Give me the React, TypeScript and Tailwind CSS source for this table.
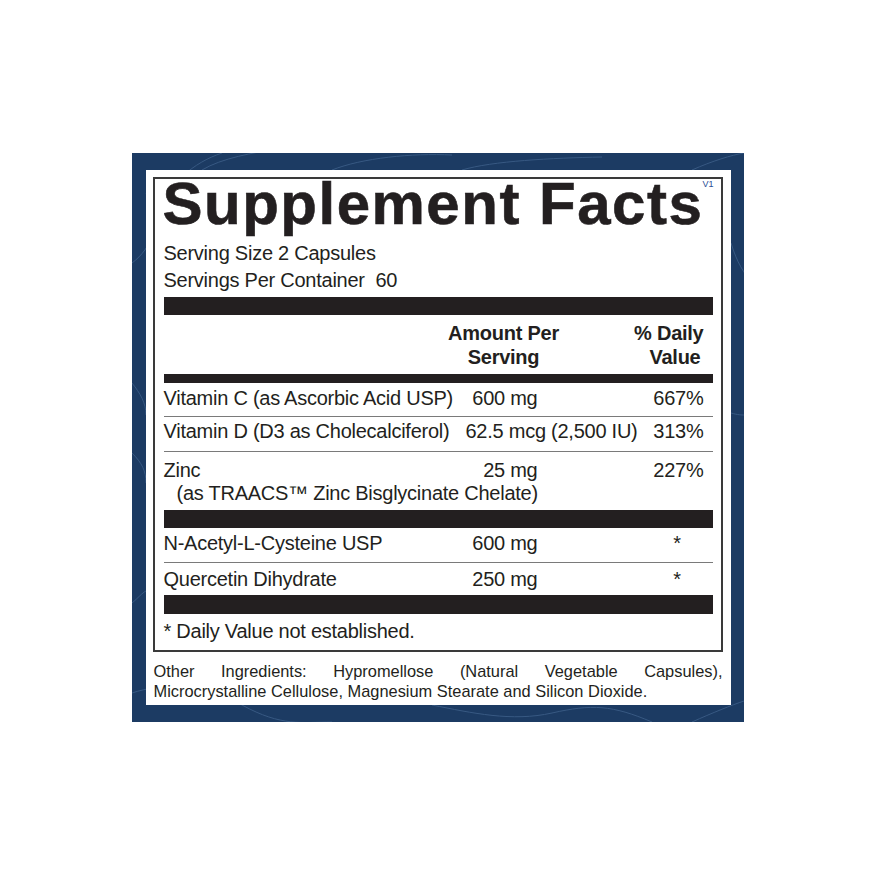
import React from 'react';

const INK = 'text-[#231f20]';

type Row = {
  name: React.ReactNode;
  amount: string;
  wide?: boolean;
  dv: string;
  pad: string;
  line?: boolean;
};

const vitamins: Row[] = [
  { name: 'Vitamin C (as Ascorbic Acid USP)', amount: '600 mg', dv: '667%', pad: 'pt-[3px] pb-[6px]', line: true },
  { name: 'Vitamin D (D3 as Cholecalciferol)', amount: '62.5 mcg (2,500 IU)', wide: true, dv: '313%', pad: 'pt-[2px] pb-[8px]', line: true },
  {
    name: (
      <>
        <div>Zinc</div>
        <div className="pl-[13px] leading-[23px]">(as TRAACS™ Zinc Bisglycinate Chelate)</div>
      </>
    ),
    amount: '25 mg',
    dv: '227%',
    pad: 'pt-[6px] pb-[5px]',
  },
];

const others: Row[] = [
  { name: 'N-Acetyl-L-Cysteine USP', amount: '600 mg', dv: '*', pad: 'pt-[3px] pb-[7px]', line: true },
  { name: 'Quercetin Dihydrate', amount: '250 mg', dv: '*', pad: 'pt-[4px] pb-[4px]' },
];

function FactRow({ row }: { row: Row }) {
  return (
    <div className={`flex items-start leading-[24px] ${row.pad} ${row.line ? 'border-b border-[#7a7a7a]' : ''}`}>
      <div className="w-[302px] whitespace-nowrap">{row.name}</div>
      <div className="w-[185px] whitespace-nowrap">
        {row.wide ? row.amount : <span className="inline-block w-[72px] text-right">{row.amount}</span>}
      </div>
      <div className={`w-[53px] ${row.dv === '*' ? 'text-center' : 'text-right'}`}>{row.dv}</div>
    </div>
  );
}

function Waves() {
  return (
    <svg className="absolute inset-0 h-full w-full" viewBox="0 0 612 569" fill="none">
      <g stroke="#4a6d98" strokeWidth="1" opacity="0.6">
        <path d="M20 60 C 40 30, 60 10, 90 0" />
        <path d="M0 110 C 20 95, 30 70, 14 40" />
        <path d="M70 17 C 90 5, 120 0, 150 -5" />
        <path d="M200 17 C 230 5, 280 0, 320 2" />
        <path d="M330 17 C 360 8, 420 5, 470 4" />
        <path d="M560 17 C 580 8, 600 2, 612 0" />
        <path d="M599 90 C 605 110, 612 120, 620 130" />
        <path d="M599 260 C 606 262, 610 262, 612 262" />
        <path d="M0 230 C 8 240, 14 250, 14 262" />
        <path d="M0 300 C 10 310, 14 318, 14 330" />
        <path d="M0 450 C 6 445, 10 440, 14 438" />
        <path d="M0 540 C 30 530, 70 530, 110 552 S 170 569, 200 569" />
        <path d="M300 552 C 340 560, 380 569, 420 560 S 480 552, 520 569" />
        <path d="M560 569 C 580 560, 600 552, 612 548" />
      </g>
    </svg>
  );
}

export default function App() {
  return (
    <div className="flex h-[875px] w-full items-center justify-center bg-white" style={{ fontFamily: '"Liberation Sans", Arial, sans-serif' }}>
      <div className="relative h-[569px] w-[612px] bg-[#1c3b63] pt-[17px] pb-[17px] pl-[14px] pr-[13px]">
        <Waves />
        <div className={`relative h-[535px] bg-white pt-[7px] pl-[7px] pr-[8px] ${INK}`}>
          <div className="relative border-2 border-[#3a3a3a] pl-[9px] pr-[8px] text-[20px] tracking-[-0.25px]">
            <span className="absolute right-[7px] top-[1px] text-[9px] leading-none tracking-normal text-[#2b4d96]">V1</span>

            <h1 className="-ml-[1px] mt-[1px] h-[48px] whitespace-nowrap text-[60px] font-bold leading-[48px] tracking-[1.5px] [-webkit-text-stroke:0.6px_#231f20]">
              Supplement Facts
            </h1>

            <div className="mt-[12px] leading-[27px]">
              <div>Serving Size 2 Capsules</div>
              <div>Servings Per Container&nbsp; 60</div>
            </div>

            <div className="mt-[3px] h-[18px] bg-[#231f20]" />

            <div className="flex pt-[6px] pb-[5px] font-bold leading-[24px]">
              <div className="w-[283px]" />
              <div className="w-[114px] text-center">
                Amount Per
                <br />
                Serving
              </div>
              <div className="flex-1 pr-[9px] text-right">
                % Daily
                <br />
                <span className="pr-[3px]">Value</span>
              </div>
            </div>

            <div className="h-[9px] bg-[#231f20]" />

            {vitamins.map((r, i) => (
              <FactRow key={i} row={r} />
            ))}

            <div className="h-[18px] bg-[#231f20]" />

            {others.map((r, i) => (
              <FactRow key={i} row={r} />
            ))}

            <div className="h-[19px] bg-[#231f20]" />

            <div className="pt-[5px] pb-[7px] leading-[24px]">* Daily Value not established.</div>
          </div>

          <div className="mt-[9px] pl-[1px] text-[16.4px] leading-[20px]">
            <div className="text-justify [text-align-last:justify]">Other Ingredients: Hypromellose (Natural Vegetable Capsules),</div>
            <div>Microcrystalline Cellulose, Magnesium Stearate and Silicon Dioxide.</div>
          </div>
        </div>
      </div>
    </div>
  );
}
